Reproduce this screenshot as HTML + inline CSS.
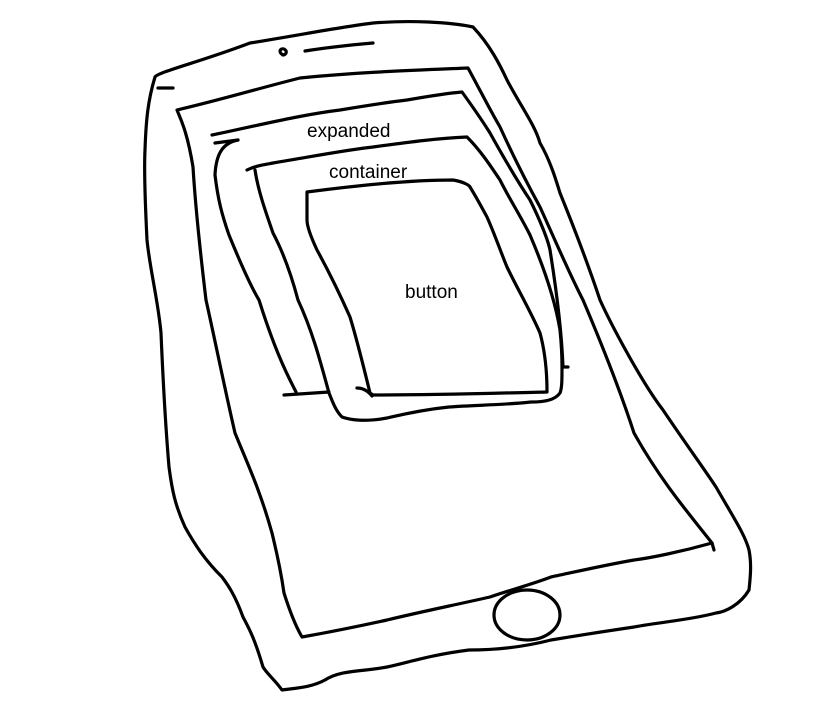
<!DOCTYPE html>
<html><head><meta charset="utf-8"><style>
html,body{margin:0;padding:0;background:#fff;width:815px;height:704px;overflow:hidden}
svg{display:block}
text{font-family:"Liberation Sans",sans-serif;font-size:19px;fill:#000}
</style></head><body>
<svg width="815" height="704" viewBox="0 0 815 704" fill="none" stroke="#000" stroke-width="3.2" stroke-linecap="round" stroke-linejoin="round">
<!-- outer phone -->
<path d="M155,77 C158,72 200,62 250,43 C300,35 340,27 373,23 C410,20 450,22 473,27 C490,45 500,65 507,80 C520,105 535,125 540,143 C550,160 556,180 560,193 C575,230 590,270 600,300 C609,320 640,380 663,410 C690,450 705,470 716,487 C735,520 745,535 749,550 C752,565 750,580 749,590 C740,605 725,612 716,613 C690,620 660,622 634,627 C600,632 575,636 551,640 C520,648 490,650 469,650 C430,655 410,662 387,667 C360,672 340,670 325,680 C310,688 295,688 282,690 C275,680 268,675 263,667 C255,640 250,630 243,617 C235,595 228,585 222,577 C205,560 195,545 185,527 C175,505 172,490 169,467 C165,420 163,380 161,333 C158,300 150,270 147,240 C145,200 144,170 145,150 C146,120 148,100 155,77 Z"/>
<path d="M158,88 L173,88"/>
<path d="M283,55 c-5,-3 -3,-7 1,-6 c4,2 2,6 -1,6"/>
<path d="M305,51 C330,47 350,45 373,43"/>
<!-- screen -->
<path d="M177,110 C220,100 260,88 300,78 C360,72 420,70 468,68 C480,90 490,110 500,127 C515,160 528,185 540,207 C555,240 570,275 583,300 C600,340 620,390 634,433 C660,480 690,515 712,543 C680,552 650,558 634,560 C600,566 575,572 551,577 C530,585 510,590 490,597 C450,606 420,612 387,620 C355,627 330,632 302,637 C295,625 290,612 284,593 C280,565 276,550 272,533 C260,490 248,465 235,433 C225,390 215,340 206,300 C200,250 195,200 193,167 C187,130 180,118 177,110 Z"/>
<path d="M712,543 L714,550"/>
<!-- expanded -->
<path d="M212,135 C260,125 300,115 340,110 C370,105 390,102 407,100 C430,96 450,93 462,92 C475,110 485,125 490,133 C505,160 520,185 530,200 C540,220 548,240 550,250 C558,300 562,340 563,367 L568,367"/>
<path d="M215,143 L238,140"/>
<path d="M238,140 C222,143 216,155 215,175 C218,200 222,215 229,235 C240,262 250,285 259,300 C270,335 280,360 290,380 L296,392"/>
<path d="M284,395 L329,392"/>
<!-- container -->
<path d="M247,170 C255,166 262,165 273,163 C310,157 345,150 373,147 C410,142 440,138 467,137 C480,150 490,165 500,180 C510,200 520,215 530,235 C545,270 555,300 560,330 C562,350 562,367 562,367 C562,380 562,388 560,393 C555,400 545,402 531,402 C505,405 475,405 449,407 C420,410 400,415 387,418 C365,422 350,420 342,417 C335,410 332,400 329,393 C320,360 312,330 298,300 C290,270 282,250 273,233 C265,210 258,190 255,170"/>
<!-- button -->
<path d="M307,192 C360,185 410,180 453,180 C465,182 470,186 470,187 C478,200 482,208 487,217 C495,235 500,250 507,267 C518,290 530,310 540,333 C546,355 547,375 547,392 C500,393 440,395 373,395 L370,393 C362,360 357,340 350,317 C338,290 328,270 317,250 C310,235 307,225 307,220 Z"/>
<path d="M357,388 C363,388 368,391 372,396"/>
<!-- home button -->
<ellipse cx="527" cy="615" rx="33" ry="25"/>
<text x="307" y="137" stroke="none">expanded</text>
<text x="329" y="178" stroke="none">container</text>
<text x="405" y="298" stroke="none">button</text>
</svg>
</body></html>
